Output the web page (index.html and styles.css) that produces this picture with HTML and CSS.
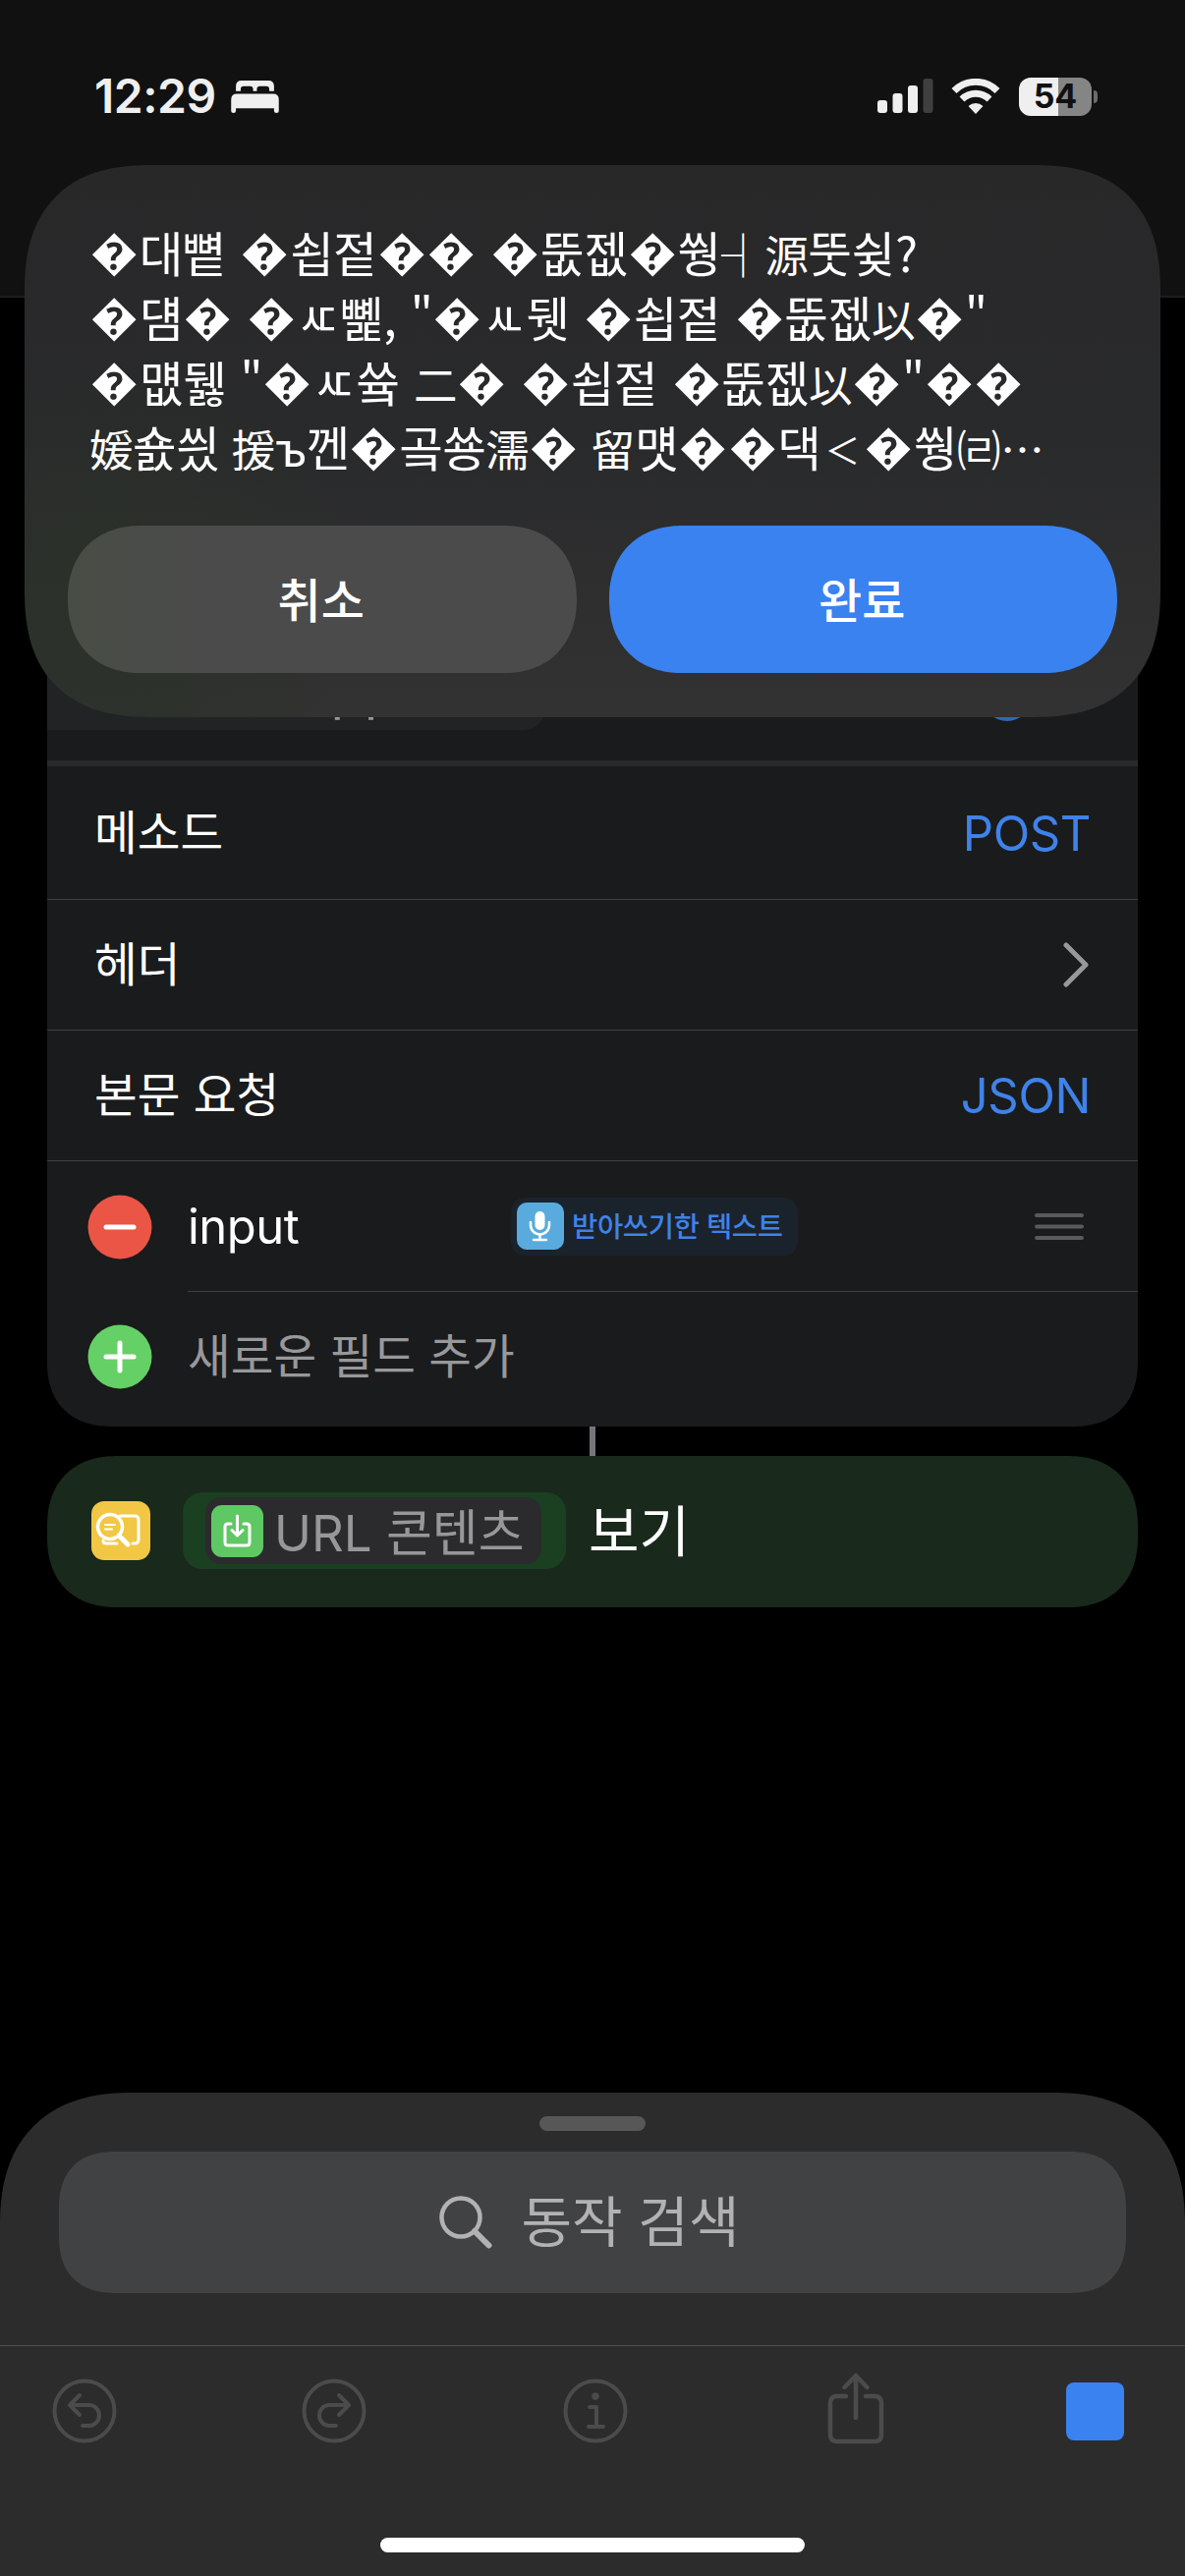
FILE: index.html
```html
<!DOCTYPE html>
<html lang="ko">
<head>
<meta charset="utf-8">
<title>단축어</title>
<link rel="stylesheet" href="styles.css">
</head>
<body>
<div class="screen">
  <header class="topbar">
    <div class="status-left">
      <span class="clock">12:29</span>
      <svg class="bed" viewBox="0 0 50 34"><path fill="#efefef" d="M5 11V6Q5 0 11 0H39Q45 0 45 6V11H40V9Q40 6 37 6H30Q27 6 27 9V11H23V9Q23 6 20 6H13Q10 6 10 9V11ZM0 32V20Q0 14 6 14H44Q50 14 50 20V32Q50 34 47.500 34Q45 34 45 32V29H5V32Q5 34 2.500 34Q0 34 0 32Z"/></svg>
    </div>
    <div class="status-right">
      <svg class="signal" viewBox="0 0 57 36"><g fill="#efefef"><rect x="0" y="22" width="10" height="13" rx="3"/><rect x="15.500" y="15" width="10" height="20" rx="3"/><rect x="31" y="7" width="10" height="28" rx="3"/></g><rect x="46.500" y="0" width="10" height="35" rx="3" fill="#3f3f3f"/></svg>
      <svg class="wifi" viewBox="0 0 50 36"><g fill="none" stroke="#efefef" stroke-width="7"><path d="M3 12.5A31 31 0 0 1 47 12.5"/><path d="M11 21A20 20 0 0 1 39 21"/></g><path fill="#efefef" d="M17.5 28A11 11 0 0 1 32.500 28L25 36Z"/></svg>
      <div class="battery"><span>54</span></div>
      <i class="nub"></i>
    </div>
  </header>

  <main class="canvas">
    <section class="action-card">
      <div class="url-row"><div class="url-field">app</div><i class="url-toggle"></i></div>
      <div class="row first"><span>메소드</span><span class="value">POST</span></div>
      <div class="row"><span>헤더</span><svg class="chevron" viewBox="0 0 26 46"><path d="M3 3L23 23L3 43" fill="none" stroke="#98989b" stroke-width="5" stroke-linecap="round" stroke-linejoin="round"/></svg></div>
      <div class="row"><span>본문 요청</span><span class="value">JSON</span></div>
      <div class="field">
        <svg class="dot" viewBox="0 0 66 66"><circle cx="33" cy="33" r="32.500" fill="#ea5545"/><path d="M19 33H47" stroke="#fff" stroke-width="5" stroke-linecap="round"/></svg>
        <div class="field-body lined">
          <span class="key">input</span>
          <span class="chip"><svg class="mic" viewBox="0 0 48 48"><rect width="48" height="48" rx="10" fill="#59abdd"/><rect x="18.500" y="9" width="10" height="19" rx="5" fill="#fff"/><g fill="none" stroke="#fff" stroke-width="2.500" stroke-linecap="round"><path d="M14 20V23A9.500 9.500 0 0 0 33 23V20M23.500 33V38M17 38H30"/></g></svg><span>받아쓰기한 텍스트</span></span>
          <svg class="grip" viewBox="0 0 50 28"><path d="M2 3H48M2 14.500H48M2 26H48" stroke="#5a5a5c" stroke-width="4" stroke-linecap="round"/></svg>
        </div>
      </div>
      <div class="field">
        <svg class="dot add" viewBox="0 0 66 66"><circle cx="33" cy="33" r="32.500" fill="#65d065"/><path d="M19 33H47M33 19V47" stroke="#fff" stroke-width="5" stroke-linecap="round"/></svg>
        <div class="field-body muted">새로운 필드 추가</div>
      </div>
    </section>
    <i class="connector"></i>
    <section class="show-card">
      <svg class="look" viewBox="0 0 60 60"><rect width="60" height="60" rx="13" fill="#f2c745"/><g fill="none" stroke="#fff" stroke-width="3" stroke-linecap="round" stroke-linejoin="round"><path d="M29 15H44Q48 15 48 19V39Q48 43 44 43H42M12 40Q12 43 15 43H26"/><circle cx="19" cy="26" r="12.500" stroke-width="3.500"/><path d="M28 35L37 44" stroke-width="5"/><path d="M14 24H24M14 28.500H21" stroke-width="2"/></g></svg>
      <div class="slot"><div class="token"><svg class="get" viewBox="0 0 53 53"><rect width="53" height="53" rx="11" fill="#60c765"/><g fill="none" stroke="#fff" stroke-width="3" stroke-linecap="round" stroke-linejoin="round"><path d="M20 19H17Q14 19 14 22V38Q14 41 17 41H36Q39 41 39 38V22Q39 19 36 19H33M26.500 11V30M21 25.500L26.500 31L32 25.500"/></g></svg><span>URL 콘텐츠</span></div></div>
      <span class="show-label">보기</span>
    </section>
  </main>

  <footer class="sheet">
    <i class="handle"></i>
    <div class="search">
      <svg class="lens" viewBox="0 0 54 54"><circle cx="22" cy="22" r="19.500" fill="none" stroke="#b2b2b5" stroke-width="4.500"/><path d="M36 36L50.500 50.500" stroke="#b2b2b5" stroke-width="6" stroke-linecap="round"/></svg>
      <span>동작 검색</span>
    </div>
    <nav class="toolbar">
      <svg class="tool" viewBox="0 0 66 66"><g fill="none" stroke="#4b4b4b" stroke-width="4" stroke-linecap="round" stroke-linejoin="round"><circle cx="33" cy="33" r="30.500"/><path d="M28 17L18 27L28 37M18 27H38A10 10.500 0 0 1 38 48H31"/></g></svg>
      <svg class="tool redo" viewBox="0 0 66 66"><g fill="none" stroke="#4b4b4b" stroke-width="4" stroke-linecap="round" stroke-linejoin="round"><circle cx="33" cy="33" r="30.500"/><path d="M38 17L48 27L38 37M48 27H28A10 10.500 0 0 0 28 48H35"/></g></svg>
      <svg class="tool info" viewBox="0 0 66 66"><g fill="none" stroke="#4b4b4b" stroke-width="4" stroke-linecap="round" stroke-linejoin="round"><circle cx="33" cy="33" r="30.500"/><path d="M27 29H34V49M26 49H41"/></g><circle cx="33" cy="18" r="3.800" fill="#4b4b4b"/></svg>
      <svg class="share" viewBox="0 0 58 74"><g fill="none" stroke="#4b4b4b" stroke-width="4.500" stroke-linecap="round" stroke-linejoin="round"><path d="M19 24H10Q3 24 3 31V63Q3 70 10 70H48Q55 70 55 63V31Q55 24 48 24H39M29 4V46M17.500 15L29 3L40.500 15"/></g></svg>
      <i class="stop"></i>
    </nav>
    <i class="home"></i>
  </footer>

  <section class="dialog">
    <p class="message"><span><i>�</i>대뼡 <i>�</i>쇱젙<i>�</i><i>�</i> <i>�</i>뚮젮<i>�</i>쒕<b>┤源</b>뚯슂?</span><span><i>�</i>덈<i>�</i> <i>�</i>ㅼ뼱, "<i>�</i>ㅻ뒛 <i>�</i>쇱젙 <i>�</i>뚮젮<b>以</b><i>�</i>"</span><span><i>�</i>먮뒗 "<i>�</i>ㅼ쓬 <b>二</b><i>�</i> <i>�</i>쇱젙 <i>�</i>뚮젮<b>以</b><i>�</i>"<i>�</i><i>�</i></span><span><b>媛</b>숈씠 <b>援</b>ъ껜<i>�</i>곸쑝<b>濡</b><i>�</i> <b>留</b>먯<i>�</i><i>�</i>댁<em>＜</em><i>�</i>쒕<b>㈃⋯</b></span></p>
    <div class="buttons">
      <button class="cancel">취소</button>
      <button class="done">완료</button>
    </div>
  </section>
</div>
</body>
</html>
```
FILE: styles.css
```css
* { box-sizing: border-box; }
body { margin: 0; background: #000; }
svg, i { display: block; flex: none; }
.screen {
  position: relative;
  width: 1206px;
  height: 2622px;
  overflow: hidden;
  display: flex;
  flex-direction: column;
  background: #000;
  color: #fff;
  font-family: Inter, "Noto Sans CJK KR", sans-serif;
}
.topbar {
  height: 303px;
  flex: none;
  display: flex;
  justify-content: space-between;
  align-items: flex-start;
  padding: 78px 89px 0 96px;
  background: #111;
  border-bottom: 2px solid #1d1d1d;
}
.status-left, .status-right { display: flex; align-items: center; height: 40px; }
.clock { font-size: 48px; font-weight: 600; letter-spacing: -0.5px; color: #efefef; line-height: 40px; }
.bed { width: 49px; height: 33px; margin-left: 15px; }
.signal { width: 57px; height: 36px; }
.wifi { width: 50px; height: 36px; margin-left: 18px; }
.battery {
  width: 74px;
  height: 39px;
  margin-left: 19px;
  border-radius: 12px;
  background: linear-gradient(90deg, #efefef 54%, #858585 54%);
  color: #111;
  text-align: center;
  font-size: 34px;
  font-weight: 700;
  line-height: 38px;
}
.nub { width: 4px; height: 13px; margin-left: 2px; border-radius: 0 4px 4px 0; background: #6b6b6b; }

.canvas { flex: 1; padding: 0 48px; display: flex; flex-direction: column; align-items: center; }
.action-card {
  width: 1110px;
  height: 1149px;
  flex: none;
  background: #1a1b1c;
  border-radius: 66px;
  corner-shape: superellipse(1.2);
  display: flex;
  flex-direction: column;
  overflow: hidden;
}
.url-row {
  height: 477px;
  flex: none;
  border-bottom: 6px solid #2a2a2c;
  display: flex;
  align-items: flex-end;
  justify-content: space-between;
  padding: 0 108px 31px 0;
}
.url-field {
  width: 507px;
  height: 100px;
  padding: 29px 0 0 257px;
  border-radius: 0 0 22px 0;
  background: #222324;
  color: #999;
  font-size: 56px;
  line-height: 60px;
}
.url-toggle { width: 50px; height: 50px; margin-bottom: 9px; border-radius: 50%; background: #2f68b5; }
.row {
  height: 133px;
  flex: none;
  padding: 0 48px;
  display: flex;
  align-items: center;
  justify-content: space-between;
  border-bottom: 1px solid #404143;
  font-size: 47.500px;
  line-height: 60px;
}
.first { height: 136px; }
.value { padding-top: 2px; color: #3f82ea; font-size: 49px; letter-spacing: -0.4px; }
.chevron { width: 26px; height: 46px; margin-right: 2px; }
.field { height: 133px; flex: none; display: flex; align-items: center; padding-left: 41px; }
.dot { width: 66px; height: 66px; margin-right: 36px; }
.add { margin-bottom: 2px; }
.field-body { height: 133px; flex: 1; display: flex; align-items: center; font-size: 47.500px; }
.lined { border-bottom: 1px solid #404143; padding-right: 55px; }
.key { width: 329px; font-size: 49px; letter-spacing: -0.5px; }
.muted { color: #98989b; padding-bottom: 8px; }
.chip {
  width: 292px;
  height: 59px;
  border-radius: 14px;
  padding-left: 6px;
  background: #1a232b;
  color: #3f82ea;
  display: flex;
  align-items: center;
  gap: 8px;
  font-size: 28.500px;
  font-weight: 500;
  letter-spacing: -0.3px;
  white-space: nowrap;
}
.chip span { padding-bottom: 4px; }
.mic { width: 48px; height: 48px; }
.grip { width: 50px; height: 28px; margin-left: auto; }
.connector { width: 6px; height: 30px; background: #77777b; }
.show-card {
  width: 1110px;
  height: 154px;
  flex: none;
  border-radius: 72px;
  corner-shape: superellipse(1.2);
  background: #19291b;
  display: flex;
  align-items: center;
  padding: 0 0 2px 45px;
}
.look { width: 60px; height: 60px; margin-right: 33px; }
.slot { width: 390px; height: 78px; border-radius: 20px; padding: 5px 23px; background: #1b3f21; }
.token {
  height: 68px;
  width: 342px;
  border-radius: 16px;
  background: #2b2b2d;
  display: flex;
  align-items: center;
  padding-left: 6px;
  gap: 11px;
  color: #97979a;
  font-size: 51px;
  white-space: nowrap;
}
.token span { padding-bottom: 3px; }
.get { width: 53px; height: 53px; }
.show-label { margin-left: 23px; padding-bottom: 8px; font-size: 56px; }

.sheet {
  height: 492px;
  flex: none;
  background: #2c2c2c;
  border-radius: 135px 135px 0 0;
  corner-shape: superellipse(1.25);
  display: flex;
  flex-direction: column;
  align-items: center;
  padding-top: 24px;
}
.handle { width: 108px; height: 15px; border-radius: 8px; background: #575757; }
.search {
  width: 1086px;
  height: 144px;
  margin-top: 21px;
  flex: none;
  border-radius: 58px;
  corner-shape: superellipse(1.25);
  background: #414244;
  color: #b2b2b5;
  font-size: 56px;
  display: flex;
  align-items: center;
  justify-content: center;
  gap: 30px;
}
.search span { padding: 0 7px 9px 0; }
.lens { width: 54px; height: 54px; }
.toolbar {
  width: 1206px;
  height: 133px;
  flex: none;
  margin-top: 53px;
  border-top: 1px solid #505050;
  display: flex;
  align-items: center;
  padding: 0 62px 0 53px;
}
.tool { width: 66px; height: 66px; }
.redo { margin-left: 188px; }
.info { margin-left: 200px; }
.share { width: 58px; height: 74px; margin: -4px 185px 0 203px; }
.stop { width: 59px; height: 59px; border-radius: 8px; background: #3a82f0; }
.home { width: 432px; height: 15px; margin-top: 63px; border-radius: 8px; background: #fff; }

.dialog {
  position: absolute;
  left: 25px;
  top: 168px;
  width: 1156px;
  height: 562px;
  border-radius: 130px;
  corner-shape: superellipse(1.3);
  padding: 55px 44px 45px;
  background: radial-gradient(circle at 8% 82%, #2b3129 0, rgba(43, 49, 41, 0) 260px), linear-gradient(#282829 0, #292a2b 50%, #323232 100%);
}
.message {
  margin: 0 0 0 22px;
  height: 312px;
  font-family: "Noto Sans CJK KR", sans-serif;
  font-size: 48.500px;
  word-spacing: 1px;
}
.message span { display: block; height: 66px; line-height: 66px; white-space: nowrap; letter-spacing: -0.300px; }
.message i { display: inline-block; width: 50.700px; line-height: 1; vertical-align: 3px; font-style: normal; text-align: center; letter-spacing: 0; }
.message b { font-weight: 400; font-size: 44.500px; line-height: 1; letter-spacing: -0.300px; }
.message em { display: inline-block; width: 44px; line-height: 1; vertical-align: 2px; font-style: normal; font-size: 36px; text-align: center; letter-spacing: 0; }
.message span:last-child { word-spacing: -0.500px; letter-spacing: -0.600px; }
.buttons { display: flex; gap: 33px; }
.buttons button {
  flex: 1;
  height: 150px;
  border: 0;
  border-radius: 75px;
  corner-shape: superellipse(1.15);
  padding: 0 2px 5px 0;
  color: #fff;
  font-family: "Noto Sans CJK KR", sans-serif;
  font-size: 48px;
  font-weight: 500;
}
.cancel { background: linear-gradient(90deg, #484d45, #4b4b4b 30%); }
.done { background: #3a82f0; }
```
